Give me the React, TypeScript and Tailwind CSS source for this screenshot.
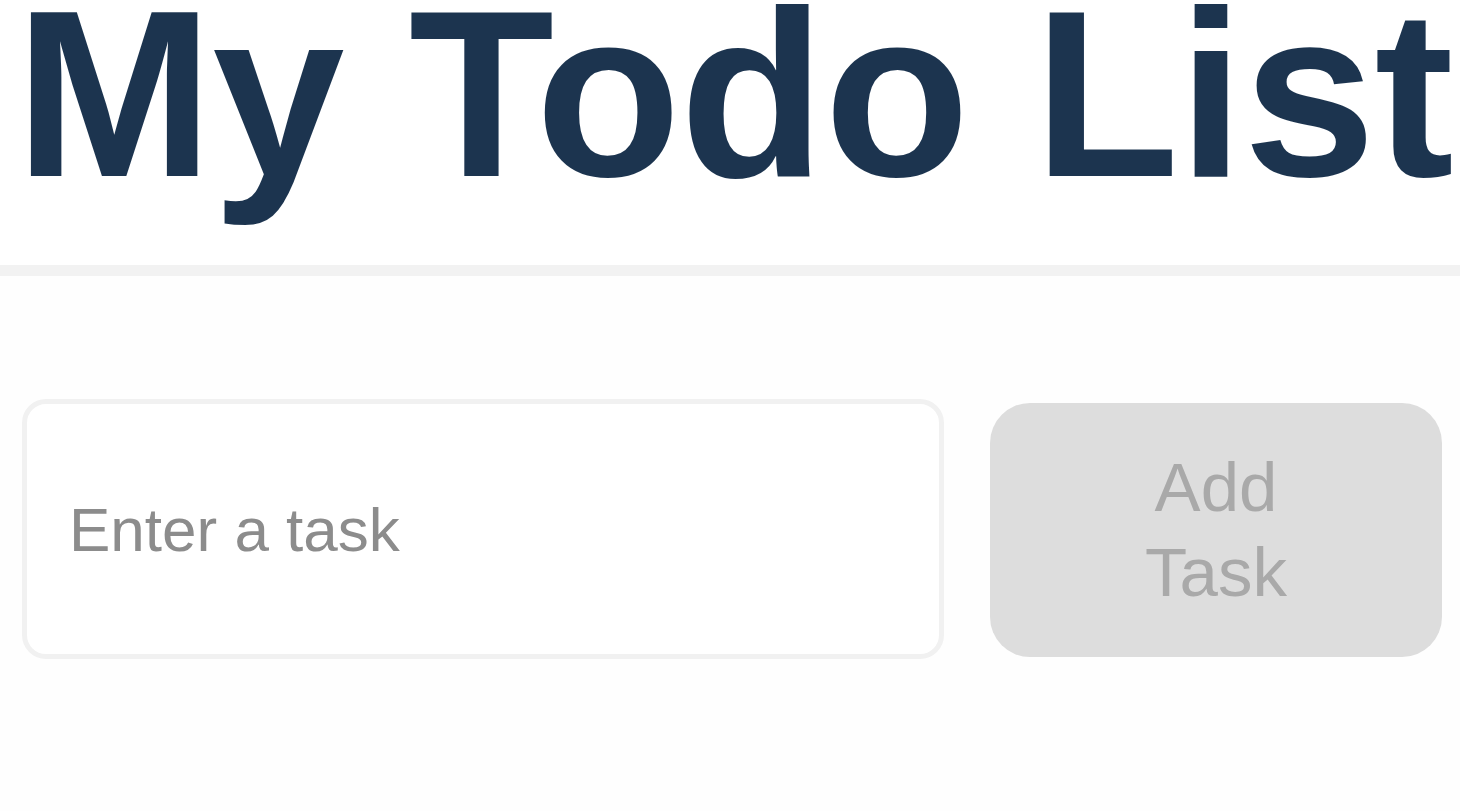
import { useState } from "react";

// Todo app header + input row (shown zoomed-in)
export default function App() {
  const [task, setTask] = useState("");

  return (
    <div className="min-h-[811px] w-full overflow-hidden bg-[#fefefe] font-['Liberation_Sans',Arial,sans-serif]">
      {/* Header */}
      <header className="bg-white pb-[52px]">
        <h1 className="mt-[-25px] whitespace-nowrap pl-[15px] text-[238px] font-bold leading-none tracking-[-1px] text-[#1c344f]">
          My Todo List
        </h1>
      </header>
      <div className="h-[11px] w-full bg-[#f2f2f2]" />

      {/* Add task row */}
      <div className="flex items-stretch gap-[46px] pl-[22px] pr-[18px] pt-[123px]">
        <input
          value={task}
          onChange={(e) => setTask(e.target.value)}
          placeholder="Enter a task"
          className="h-[260px] w-[922px] rounded-[24px] border-[5px] border-[#f1f1f1] bg-white pl-[42px] text-[62px] text-[#333] outline-none placeholder:text-[#8c8c8c]"
        />
        <button
          disabled={!task.trim()}
          className="mt-[4px] h-[254px] w-[452px] rounded-[40px] bg-[#dddddd] px-[130px] text-center text-[69px] leading-[85px] text-[#a9a9a9]"
        >
          Add Task
        </button>
      </div>
    </div>
  );
}
